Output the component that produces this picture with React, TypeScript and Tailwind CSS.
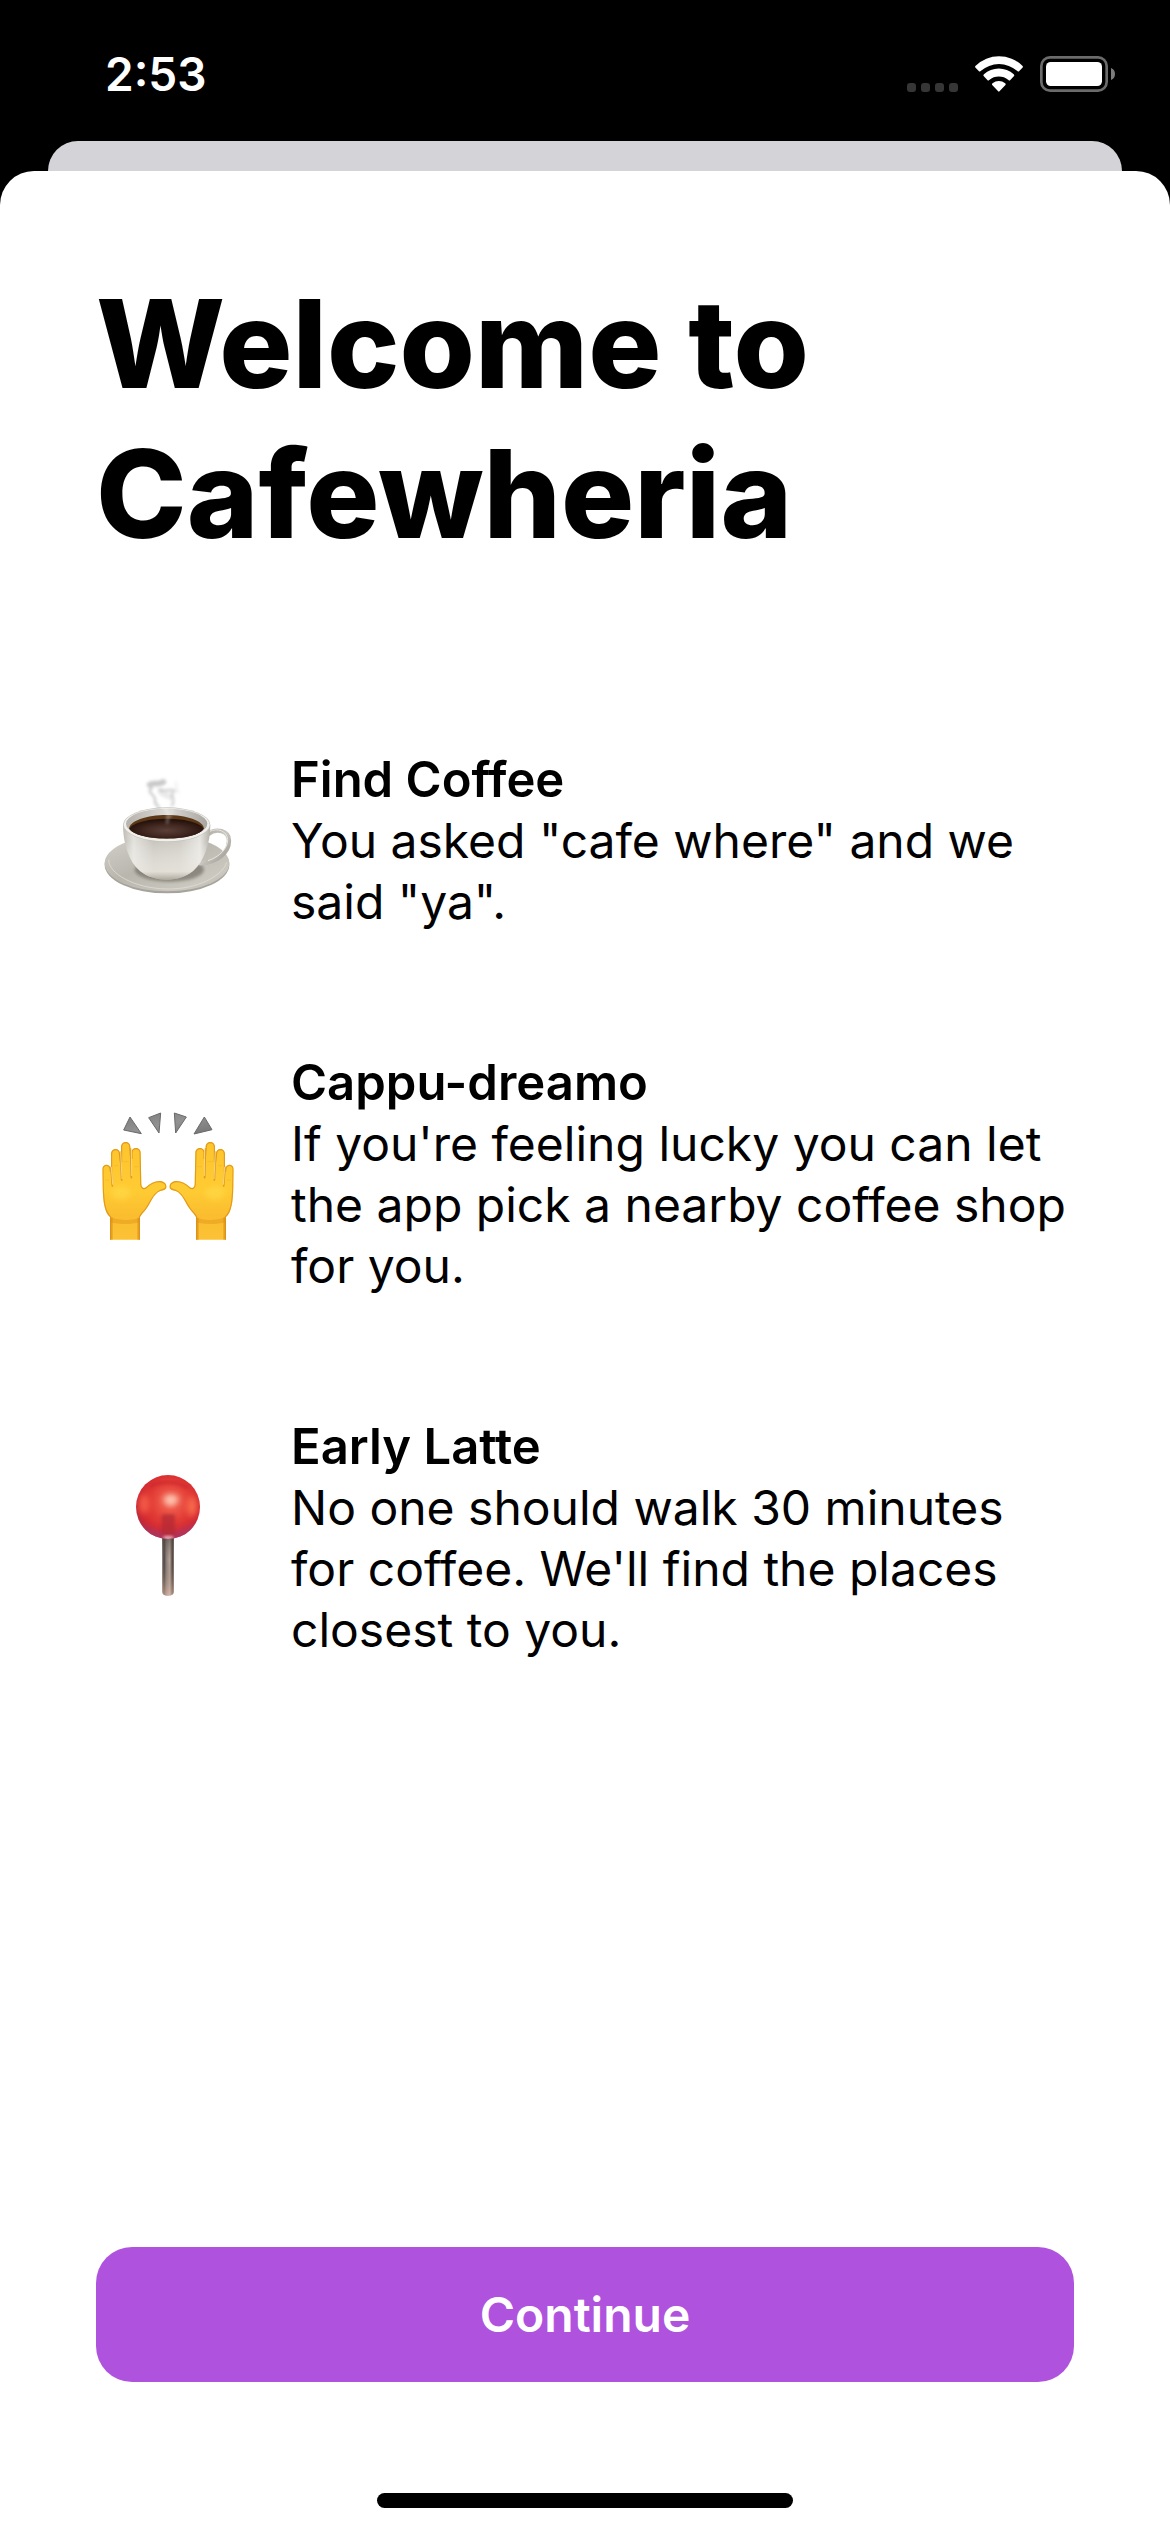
import React from "react";

function CoffeeIcon() {
  return (
    <svg viewBox="18 4 432 480" className="h-40 w-36 shrink-0" aria-hidden="true">
      <defs>
        <linearGradient id="saucer" x1="0" y1="0" x2="1" y2="1">
          <stop offset="0" stopColor="#d3d1ca" />
          <stop offset="0.45" stopColor="#b9b6ae" />
          <stop offset="0.8" stopColor="#cbc8c0" />
          <stop offset="1" stopColor="#b3b0a7" />
        </linearGradient>
        <linearGradient id="cupBody" x1="0" y1="0" x2="1" y2="0">
          <stop offset="0" stopColor="#c0bdb5" />
          <stop offset="0.12" stopColor="#e4e2dd" />
          <stop offset="0.35" stopColor="#c9c6be" />
          <stop offset="0.65" stopColor="#cfccc4" />
          <stop offset="0.88" stopColor="#e8e6e1" />
          <stop offset="1" stopColor="#b3b0a7" />
        </linearGradient>
        <linearGradient id="cupShade" x1="0" y1="0" x2="0" y2="1">
          <stop offset="0.3" stopColor="#fff" stopOpacity="0" />
          <stop offset="0.85" stopColor="#ece8e0" stopOpacity="0.7" />
          <stop offset="1" stopColor="#a8a297" stopOpacity="0.8" />
        </linearGradient>
        <linearGradient id="cupInside" x1="0" y1="0" x2="1" y2="0">
          <stop offset="0" stopColor="#b5b2ac" />
          <stop offset="0.5" stopColor="#dddbd8" />
          <stop offset="1" stopColor="#a9a6a0" />
        </linearGradient>
        <radialGradient id="coffee" cx="0.5" cy="0.6" r="0.55">
          <stop offset="0" stopColor="#5b4038" />
          <stop offset="0.55" stopColor="#40271f" />
          <stop offset="1" stopColor="#24110b" />
        </radialGradient>
        <linearGradient id="handle" x1="0" y1="0" x2="1" y2="1">
          <stop offset="0" stopColor="#aaa79f" />
          <stop offset="0.5" stopColor="#c9c7c0" />
          <stop offset="1" stopColor="#96938b" />
        </linearGradient>
        <filter id="soft" x="-30%" y="-30%" width="160%" height="160%">
          <feGaussianBlur stdDeviation="5" />
        </filter>
        <filter id="steam" x="-30%" y="-30%" width="160%" height="160%">
          <feGaussianBlur stdDeviation="4" />
        </filter>
      </defs>
      <ellipse cx="231" cy="315" rx="187" ry="86" fill="#a6a39a" />
      <ellipse cx="231" cy="311" rx="187" ry="84" fill="url(#saucer)" />
      <path d="M56 300C55 340 130 386 231 388C320 389 398 350 410 308" fill="none" stroke="#dfddd7" strokeWidth="3" opacity="0.8" />
      <ellipse cx="238" cy="330" rx="104" ry="36" fill="#6f6b61" opacity="0.65" filter="url(#soft)" />
      <path d="M354 224C378 204 417 212 417 243C417 279 380 309 330 311" fill="none" stroke="url(#handle)" strokeWidth="13" strokeLinecap="round" />
      <path d="M358 216C382 203 411 213 413 240C414 266 388 292 354 303" fill="none" stroke="#e8e6e1" strokeWidth="3" />
      <path d="M99 196C99 250 116 306 150 334C172 352 202 360 231 360C260 360 288 351 309 334C342 306 361 250 361 196Z" fill="url(#cupBody)" />
      <path d="M99 196C99 250 116 306 150 334C172 352 202 360 231 360C260 360 288 351 309 334C342 306 361 250 361 196Z" fill="url(#cupShade)" />
      <ellipse cx="230" cy="195" rx="131" ry="52" fill="#c6c3bc" />
      <ellipse cx="230" cy="195" rx="129" ry="50" fill="#f0efec" />
      <ellipse cx="230" cy="192" rx="122" ry="45" fill="url(#cupInside)" />
      <path d="M117 206C121 183 170 166 230 166C290 166 338 183 342 206C332 224 288 237 230 237C172 237 128 224 117 206Z" fill="#5c3817" />
      <path d="M118 207C128 189 176 177 230 177C284 177 331 189 341 207C330 225 288 236 230 236C172 236 129 225 118 207Z" fill="url(#coffee)" />
      <g fill="none" strokeLinecap="round" filter="url(#steam)">
        <path d="M179 75C190 66 202 78 220 67" stroke="#777" strokeWidth="17" opacity="0.4" />
        <path d="M186 84C166 99 198 106 195 120C192 132 202 137 206 142" stroke="#888" strokeWidth="7" opacity="0.45" />
        <path d="M210 90C223 99 240 85 252 93C237 103 258 121 246 137" stroke="#999" strokeWidth="9" opacity="0.38" />
        <path d="M212 95C218 108 229 104 239 111" stroke="#aaa" strokeWidth="18" opacity="0.25" />
        <path d="M257 68C264 78 252 84 265 98" stroke="#bbb" strokeWidth="7" opacity="0.2" />
        <path d="M222 145C241 154 231 170 232 190" stroke="#fff" strokeWidth="6" opacity="0.4" />
        <path d="M248 148C252 158 240 160 240 174" stroke="#fff" strokeWidth="6" opacity="0.3" />
      </g>
    </svg>
  );
}

function Hand() {
  return (
    <g>
      <path
        d="M60 422V354C43 339 40 310 38 270L37 211C37 193 60 193 62 209L63 218V166C63 145 90 145 90 164L93 190V145C93 124 121 124 121 144L124 180V162C124 142 152 142 152 162L154 256C155 268 162 269 168 265C180 252 196 245 211 246C224 248 231 256 229 266C227 273 219 273 211 276C189 285 184 310 168 331C161 340 154 347 150 354V422Z"
        fill="url(#skin)"
      />
      <path
        d="M60 422V354C43 339 40 310 38 270L37 211C37 193 60 193 62 209L63 218V166C63 145 90 145 90 164L93 190V145C93 124 121 124 121 144L124 180V162C124 142 152 142 152 162L154 256C155 268 162 269 168 265C180 252 196 245 211 246C224 248 231 256 229 266C227 273 219 273 211 276C189 285 184 310 168 331C161 340 154 347 150 354V422"
        fill="none"
        stroke="#d98c12"
        strokeWidth="7"
        opacity="0.75"
        clipPath="url(#handClip)"
        filter="url(#edge)"
      />
      <path d="M63 205L67 261M91 160L95 243M122 150L124 236" fill="none" stroke="#e09a1c" strokeWidth="5" strokeLinecap="round" />
      <path d="M64 205L68 256M92 160L96 239M124 150L125 230" fill="none" stroke="#fff0b8" strokeWidth="2" strokeLinecap="round" />
      <path d="M60 352C80 366 130 366 150 354V370C125 377 85 377 60 370Z" fill="#e59a1c" opacity="0.5" filter="url(#edge)" />
      <path d="M64 356V422M146 358V422" stroke="#d88b18" strokeWidth="8" opacity="0.55" filter="url(#edge)" />
      <ellipse cx="93" cy="282" rx="29" ry="20" fill="#ffda4a" opacity="0.6" filter="url(#glow)" />
      <path d="M72 200H84M100 188H116M132 203H146M47 243H57" stroke="#f2ae2b" strokeWidth="3" opacity="0.5" filter="url(#edge)" />
    </g>
  );
}

function HandsIcon() {
  return (
    <svg viewBox="18 -15 432 480" className="h-40 w-36 shrink-0" aria-hidden="true">
      <defs>
        <linearGradient id="skin" x1="0" y1="0" x2="0" y2="1">
          <stop offset="0" stopColor="#fdc42d" />
          <stop offset="0.5" stopColor="#ffcb33" />
          <stop offset="0.75" stopColor="#fabd2f" />
          <stop offset="1" stopColor="#fcc235" />
        </linearGradient>
        <linearGradient id="ray" x1="0" y1="0" x2="1" y2="1">
          <stop offset="0" stopColor="#7b7b7b" />
          <stop offset="0.5" stopColor="#929292" />
          <stop offset="1" stopColor="#747474" />
        </linearGradient>
        <clipPath id="handClip">
          <path d="M60 422V354C43 339 40 310 38 270L37 211C37 193 60 193 62 209L63 218V166C63 145 90 145 90 164L93 190V145C93 124 121 124 121 144L124 180V162C124 142 152 142 152 162L154 256C155 268 162 269 168 265C180 252 196 245 211 246C224 248 231 256 229 266C227 273 219 273 211 276C189 285 184 310 168 331C161 340 154 347 150 354V422Z" />
        </clipPath>
        <filter id="edge" x="-10%" y="-10%" width="120%" height="120%">
          <feGaussianBlur stdDeviation="2" />
        </filter>
        <filter id="glow" x="-40%" y="-40%" width="180%" height="180%">
          <feGaussianBlur stdDeviation="8" />
        </filter>
      </defs>
      <path d="M120 54L154 104L101 93ZM176 56L212 42L207 102ZM253 42L289 54L257 102ZM343 54L366 92L312 105Z" fill="url(#ray)" stroke="#6a6a6a" strokeWidth="3" />
      <Hand />
      <g transform="translate(468 0) scale(-1 1)">
        <Hand />
      </g>
    </svg>
  );
}

function PinIcon() {
  return (
    <svg viewBox="18 -3 432 480" className="h-40 w-36 shrink-0" aria-hidden="true">
      <defs>
        <radialGradient id="ball" cx="0.54" cy="0.42" r="0.62">
          <stop offset="0" stopColor="#f9907c" />
          <stop offset="0.2" stopColor="#ee594a" />
          <stop offset="0.5" stopColor="#e23c36" />
          <stop offset="0.78" stopColor="#d42a31" />
          <stop offset="1" stopColor="#ab2a3d" />
        </radialGradient>
        <linearGradient id="stick" x1="0" y1="0" x2="1" y2="0">
          <stop offset="0" stopColor="#a69a92" />
          <stop offset="0.16" stopColor="#45403e" />
          <stop offset="0.35" stopColor="#8b7d76" />
          <stop offset="0.65" stopColor="#b8a59a" />
          <stop offset="0.86" stopColor="#4f4540" />
          <stop offset="1" stopColor="#8d817a" />
        </linearGradient>
        <linearGradient id="stickFade" x1="0" y1="0" x2="0" y2="1">
          <stop offset="0" stopColor="#45433f" stopOpacity="0.6" />
          <stop offset="0.4" stopColor="#6b5d55" stopOpacity="0" />
          <stop offset="1" stopColor="#f0c8b4" stopOpacity="0.55" />
        </linearGradient>
        <clipPath id="ballClip">
          <circle cx="234" cy="144" r="96" />
        </clipPath>
        <filter id="ballSoft" x="-50%" y="-50%" width="200%" height="200%">
          <feGaussianBlur stdDeviation="9" />
        </filter>
        <filter id="ballEdge" x="-30%" y="-30%" width="160%" height="160%">
          <feGaussianBlur stdDeviation="4" />
        </filter>
      </defs>
      <path d="M216 230H252V398Q250 410 234 410Q218 410 216 398Z" fill="url(#stick)" />
      <path d="M216 230H252V398Q250 410 234 410Q218 410 216 398Z" fill="url(#stickFade)" />
      <circle cx="234" cy="144" r="96" fill="url(#ball)" />
      <g clipPath="url(#ballClip)">
        <path d="M142 185C180 228 285 232 328 180L310 250H160Z" fill="#a9386b" opacity="0.75" filter="url(#ballSoft)" />
        <ellipse cx="162" cy="135" rx="15" ry="30" fill="#ff6e50" opacity="0.7" filter="url(#ballSoft)" />
        <ellipse cx="306" cy="142" rx="14" ry="30" fill="#ff7a55" opacity="0.8" filter="url(#ballSoft)" />
        <ellipse cx="243" cy="121" rx="23" ry="14" fill="#ffd3c0" opacity="0.9" filter="url(#ballSoft)" />
        <path d="M180 83C210 65 265 66 293 88" fill="none" stroke="#c5222a" strokeWidth="12" opacity="0.45" filter="url(#ballEdge)" />
        <rect x="215" y="166" width="40" height="66" rx="6" fill="#b32c36" opacity="0.75" filter="url(#ballEdge)" />
        <ellipse cx="235" cy="236" rx="16" ry="6" fill="#ffc9d2" opacity="0.8" filter="url(#ballEdge)" />
      </g>
    </svg>
  );
}

function StatusBar() {
  return (
    <header className="flex h-[141px] items-center justify-between pt-[7px] pr-[55px] pl-[105px] text-white">
      <time className="text-[46px] leading-14 font-semibold">2:53</time>
      <div className="flex items-end gap-[17px]">
        <div className="flex gap-[5px]">
          {[0, 1, 2, 3].map((dot) => (
            <span key={dot} className="size-[9px] rounded-[3px] bg-[#363636]" />
          ))}
        </div>
        <svg viewBox="315 75 145 108" className="h-9 w-12" fill="currentColor" aria-label="Wi-Fi">
          <path d="M316 109Q314 107 317 104A101 101 0 0 1 458 104Q461 107 459 109L448 121Q446 123 443 120A84 84 0 0 0 332 120Q329 123 327 121Z" />
          <path d="M341 135Q339 133 342 130A66 66 0 0 1 432 130Q435 133 433 135L421 148Q419 150 416 147A46 46 0 0 0 358 147Q355 150 353 148Z" />
          <path d="M367 162Q365 160 368 157A30 30 0 0 1 406 157Q409 160 407 162L389 181Q387 184 385 181Z" />
        </svg>
        <svg viewBox="510 78 225 108" className="h-9 w-[75px]" aria-label="Battery full">
          <rect x="514" y="82" width="196" height="100" rx="26" fill="none" stroke="#6b6b6b" strokeWidth="8" />
          <rect x="528" y="96" width="168" height="72" rx="14" fill="#fff" />
          <path d="M723 114C739 119 739 145 723 150Z" fill="#7c7c7c" />
        </svg>
      </div>
    </header>
  );
}

const features = [
  {
    icon: <CoffeeIcon />,
    title: "Find Coffee",
    text: 'You asked "cafe where" and we said "ya".',
  },
  {
    icon: <HandsIcon />,
    title: "Cappu-dreamo",
    text: "If you're feeling lucky you can let the app pick a nearby coffee shop for you.",
  },
  {
    icon: <PinIcon />,
    title: "Early Latte",
    text: "No one should walk 30 minutes for coffee. We'll find the places closest to you.",
  },
];

export default function App() {
  return (
    <div className="flex min-h-screen flex-col bg-black font-['Inter',sans-serif] text-black">
      <StatusBar />
      <div className="mx-12 h-[30px] rounded-t-[30px] bg-[#d4d3d8]" />
      <main className="flex grow flex-col rounded-t-[34px] bg-white px-24 pt-[98px] pb-6">
        <h1 className="max-w-[800px] text-[122px] leading-[150px] font-extrabold">
          Welcome to Cafewheria
        </h1>
        <ul className="mt-[180px] flex flex-col gap-[120px]">
          {features.map((feature) => (
            <li key={feature.title} className="flex items-center gap-[51px]">
              {feature.icon}
              <div className="min-w-0 grow leading-[61px]">
                <h2 className="text-[49px] font-semibold">{feature.title}</h2>
                <p className="text-[48px]">{feature.text}</p>
              </div>
            </li>
          ))}
        </ul>
        <button
          type="button"
          className="mt-auto h-[135px] w-full rounded-[36px] bg-[#af52de] text-[48px] font-semibold text-white"
        >
          Continue
        </button>
        <div className="mx-auto mt-[111px] h-[15px] w-[416px] rounded-full bg-black" />
      </main>
    </div>
  );
}
